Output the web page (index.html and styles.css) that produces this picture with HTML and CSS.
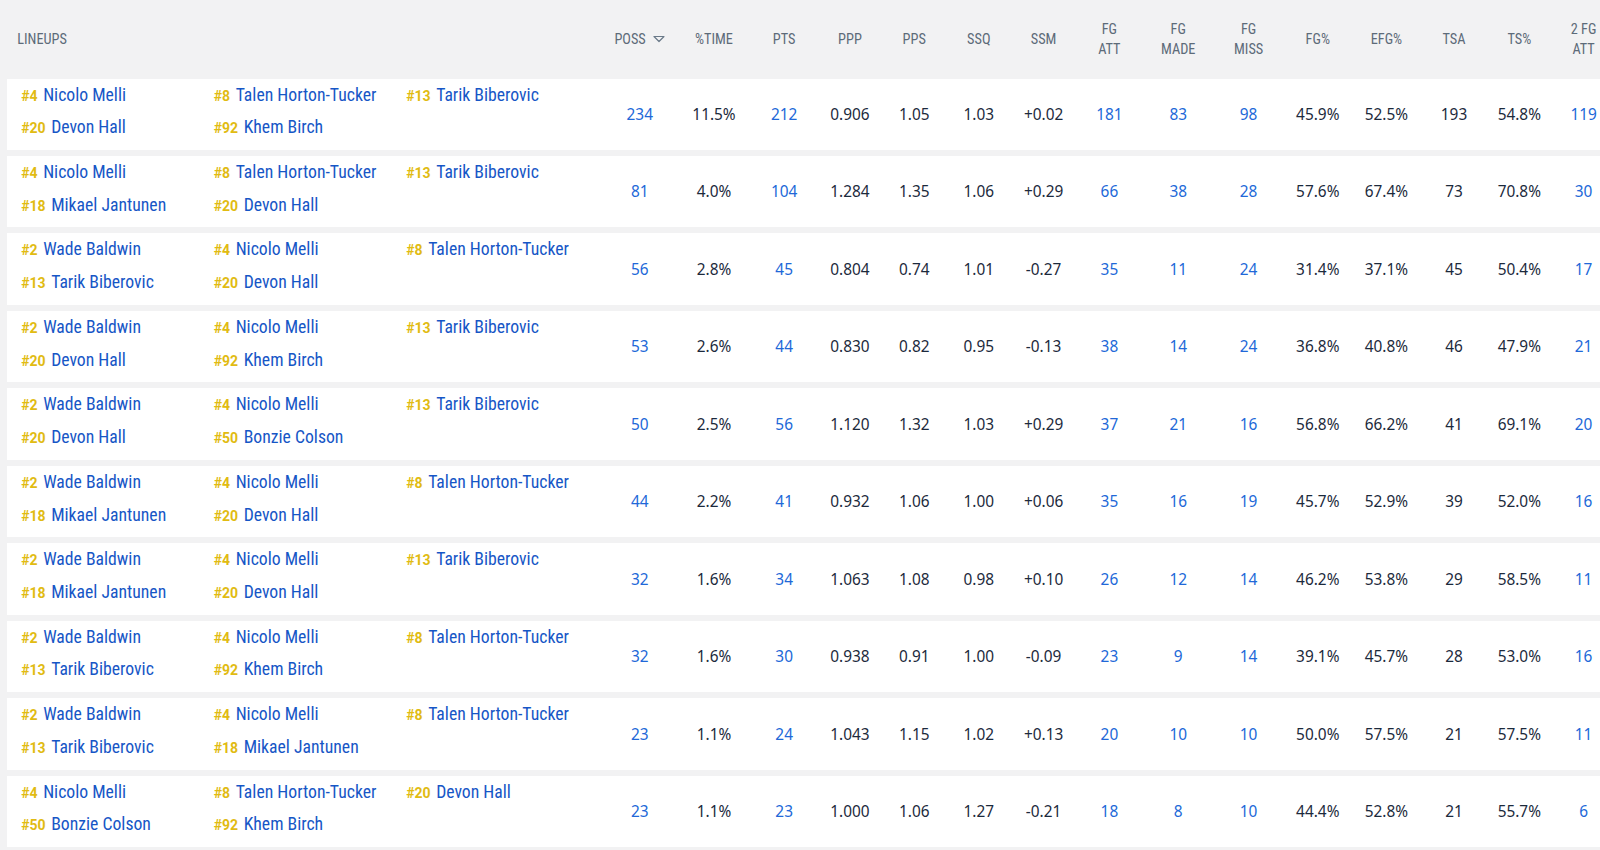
FILE: index.html
```html
<!DOCTYPE html>
<html lang="en">
<head>
<meta charset="utf-8">
<title>Lineups</title>
<link rel="stylesheet" href="styles.css">
</head>
<body>
<div class="table">
  <div class="head">
    <div class="h-lineup">LINEUPS</div>
    <div class="h">POSS <svg class="sort" width="12" height="8" viewBox="0 0 12 8"><path d="M1 1.5 L11 1.5 L6 6.5 Z" fill="none" stroke="#6b7a89" stroke-width="1.2" stroke-linejoin="round"/></svg></div>
    <div class="h">%TIME</div>
    <div class="h">PTS</div>
    <div class="h">PPP</div>
    <div class="h">PPS</div>
    <div class="h">SSQ</div>
    <div class="h">SSM</div>
    <div class="h">FG<br>ATT</div>
    <div class="h">FG<br>MADE</div>
    <div class="h">FG<br>MISS</div>
    <div class="h">FG%</div>
    <div class="h">EFG%</div>
    <div class="h">TSA</div>
    <div class="h">TS%</div>
    <div class="h">2 FG<br>ATT</div>
  </div>

  <div class="row">
    <div class="lineup">
      <span class="p"><b>#4</b>Nicolo Melli</span><span class="p"><b>#8</b>Talen Horton-Tucker</span><span class="p"><b>#13</b>Tarik Biberovic</span>
      <span class="p"><b>#20</b>Devon Hall</span><span class="p"><b>#92</b>Khem Birch</span>
    </div>
    <div class="n l">234</div><div class="n">11.5%</div><div class="n l">212</div><div class="n">0.906</div><div class="n">1.05</div><div class="n">1.03</div><div class="n">+0.02</div><div class="n l">181</div><div class="n l">83</div><div class="n l">98</div><div class="n">45.9%</div><div class="n">52.5%</div><div class="n">193</div><div class="n">54.8%</div><div class="n l">119</div><div class="n"></div>
  </div>

  <div class="row">
    <div class="lineup">
      <span class="p"><b>#4</b>Nicolo Melli</span><span class="p"><b>#8</b>Talen Horton-Tucker</span><span class="p"><b>#13</b>Tarik Biberovic</span>
      <span class="p"><b>#18</b>Mikael Jantunen</span><span class="p"><b>#20</b>Devon Hall</span>
    </div>
    <div class="n l">81</div><div class="n">4.0%</div><div class="n l">104</div><div class="n">1.284</div><div class="n">1.35</div><div class="n">1.06</div><div class="n">+0.29</div><div class="n l">66</div><div class="n l">38</div><div class="n l">28</div><div class="n">57.6%</div><div class="n">67.4%</div><div class="n">73</div><div class="n">70.8%</div><div class="n l">30</div><div class="n"></div>
  </div>

  <div class="row">
    <div class="lineup">
      <span class="p"><b>#2</b>Wade Baldwin</span><span class="p"><b>#4</b>Nicolo Melli</span><span class="p"><b>#8</b>Talen Horton-Tucker</span>
      <span class="p"><b>#13</b>Tarik Biberovic</span><span class="p"><b>#20</b>Devon Hall</span>
    </div>
    <div class="n l">56</div><div class="n">2.8%</div><div class="n l">45</div><div class="n">0.804</div><div class="n">0.74</div><div class="n">1.01</div><div class="n">-0.27</div><div class="n l">35</div><div class="n l">11</div><div class="n l">24</div><div class="n">31.4%</div><div class="n">37.1%</div><div class="n">45</div><div class="n">50.4%</div><div class="n l">17</div><div class="n"></div>
  </div>

  <div class="row">
    <div class="lineup">
      <span class="p"><b>#2</b>Wade Baldwin</span><span class="p"><b>#4</b>Nicolo Melli</span><span class="p"><b>#13</b>Tarik Biberovic</span>
      <span class="p"><b>#20</b>Devon Hall</span><span class="p"><b>#92</b>Khem Birch</span>
    </div>
    <div class="n l">53</div><div class="n">2.6%</div><div class="n l">44</div><div class="n">0.830</div><div class="n">0.82</div><div class="n">0.95</div><div class="n">-0.13</div><div class="n l">38</div><div class="n l">14</div><div class="n l">24</div><div class="n">36.8%</div><div class="n">40.8%</div><div class="n">46</div><div class="n">47.9%</div><div class="n l">21</div><div class="n"></div>
  </div>

  <div class="row">
    <div class="lineup">
      <span class="p"><b>#2</b>Wade Baldwin</span><span class="p"><b>#4</b>Nicolo Melli</span><span class="p"><b>#13</b>Tarik Biberovic</span>
      <span class="p"><b>#20</b>Devon Hall</span><span class="p"><b>#50</b>Bonzie Colson</span>
    </div>
    <div class="n l">50</div><div class="n">2.5%</div><div class="n l">56</div><div class="n">1.120</div><div class="n">1.32</div><div class="n">1.03</div><div class="n">+0.29</div><div class="n l">37</div><div class="n l">21</div><div class="n l">16</div><div class="n">56.8%</div><div class="n">66.2%</div><div class="n">41</div><div class="n">69.1%</div><div class="n l">20</div><div class="n"></div>
  </div>

  <div class="row">
    <div class="lineup">
      <span class="p"><b>#2</b>Wade Baldwin</span><span class="p"><b>#4</b>Nicolo Melli</span><span class="p"><b>#8</b>Talen Horton-Tucker</span>
      <span class="p"><b>#18</b>Mikael Jantunen</span><span class="p"><b>#20</b>Devon Hall</span>
    </div>
    <div class="n l">44</div><div class="n">2.2%</div><div class="n l">41</div><div class="n">0.932</div><div class="n">1.06</div><div class="n">1.00</div><div class="n">+0.06</div><div class="n l">35</div><div class="n l">16</div><div class="n l">19</div><div class="n">45.7%</div><div class="n">52.9%</div><div class="n">39</div><div class="n">52.0%</div><div class="n l">16</div><div class="n"></div>
  </div>

  <div class="row">
    <div class="lineup">
      <span class="p"><b>#2</b>Wade Baldwin</span><span class="p"><b>#4</b>Nicolo Melli</span><span class="p"><b>#13</b>Tarik Biberovic</span>
      <span class="p"><b>#18</b>Mikael Jantunen</span><span class="p"><b>#20</b>Devon Hall</span>
    </div>
    <div class="n l">32</div><div class="n">1.6%</div><div class="n l">34</div><div class="n">1.063</div><div class="n">1.08</div><div class="n">0.98</div><div class="n">+0.10</div><div class="n l">26</div><div class="n l">12</div><div class="n l">14</div><div class="n">46.2%</div><div class="n">53.8%</div><div class="n">29</div><div class="n">58.5%</div><div class="n l">11</div><div class="n"></div>
  </div>

  <div class="row">
    <div class="lineup">
      <span class="p"><b>#2</b>Wade Baldwin</span><span class="p"><b>#4</b>Nicolo Melli</span><span class="p"><b>#8</b>Talen Horton-Tucker</span>
      <span class="p"><b>#13</b>Tarik Biberovic</span><span class="p"><b>#92</b>Khem Birch</span>
    </div>
    <div class="n l">32</div><div class="n">1.6%</div><div class="n l">30</div><div class="n">0.938</div><div class="n">0.91</div><div class="n">1.00</div><div class="n">-0.09</div><div class="n l">23</div><div class="n l">9</div><div class="n l">14</div><div class="n">39.1%</div><div class="n">45.7%</div><div class="n">28</div><div class="n">53.0%</div><div class="n l">16</div><div class="n"></div>
  </div>

  <div class="row">
    <div class="lineup">
      <span class="p"><b>#2</b>Wade Baldwin</span><span class="p"><b>#4</b>Nicolo Melli</span><span class="p"><b>#8</b>Talen Horton-Tucker</span>
      <span class="p"><b>#13</b>Tarik Biberovic</span><span class="p"><b>#18</b>Mikael Jantunen</span>
    </div>
    <div class="n l">23</div><div class="n">1.1%</div><div class="n l">24</div><div class="n">1.043</div><div class="n">1.15</div><div class="n">1.02</div><div class="n">+0.13</div><div class="n l">20</div><div class="n l">10</div><div class="n l">10</div><div class="n">50.0%</div><div class="n">57.5%</div><div class="n">21</div><div class="n">57.5%</div><div class="n l">11</div><div class="n"></div>
  </div>

  <div class="row">
    <div class="lineup">
      <span class="p"><b>#4</b>Nicolo Melli</span><span class="p"><b>#8</b>Talen Horton-Tucker</span><span class="p"><b>#20</b>Devon Hall</span>
      <span class="p"><b>#50</b>Bonzie Colson</span><span class="p"><b>#92</b>Khem Birch</span>
    </div>
    <div class="n l">23</div><div class="n">1.1%</div><div class="n l">23</div><div class="n">1.000</div><div class="n">1.06</div><div class="n">1.27</div><div class="n">-0.21</div><div class="n l">18</div><div class="n l">8</div><div class="n l">10</div><div class="n">44.4%</div><div class="n">52.8%</div><div class="n">21</div><div class="n">55.7%</div><div class="n l">6</div><div class="n"></div>
  </div>
</div>
</body>
</html>
```

FILE: styles.css
```css
html, body {
  margin: 0;
  padding: 0;
}
body {
  background: #f2f2f3;
  overflow: hidden;
  width: 1600px;
  height: 850px;
}
.table {
  --cols: 595px 75.5px 73px 67.3px 64.3px 64.3px 64.8px 64.8px 66.8px 70.9px 69.9px 68.4px 68.9px 66.3px 64.3px 64.3px 60px;
  width: 1720px;
  padding-left: 7px;
}
.head {
  display: grid;
  grid-template-columns: var(--cols);
  height: 78.5px;
  align-items: center;
  font-family: "Roboto Condensed", "Liberation Sans Narrow", "DejaVu Sans Condensed", Roboto, sans-serif;
  font-size: 14.3px;
  line-height: 20.4px;
  color: #5d6b79;
}
.h-lineup {
  padding-left: 10.2px;
}
.h {
  text-align: center;
  white-space: nowrap;
}
.sort {
  margin-left: 4px;
  vertical-align: 1px;
}
.row {
  display: grid;
  grid-template-columns: var(--cols);
  height: 71.4px;
  margin-bottom: 6.1px;
  background: #ffffff;
  align-items: center;
}
.lineup {
  align-self: start;
  display: grid;
  grid-template-columns: 192.5px 192.5px 1fr;
  padding: 1px 0 0 14.3px;
  line-height: 31.6px;
  font-family: "Roboto Condensed", "Liberation Sans Narrow", "DejaVu Sans Condensed", Roboto, sans-serif;
  font-size: 17.7px;
  color: #1656c6;
  white-space: nowrap;
}
.p b {
  font-family: Roboto, "Noto Sans", sans-serif;
  font-size: 14px;
  font-weight: 700;
  color: #e1bb12;
  margin-right: 5.5px;
}
.n {
  text-align: center;
  font-family: "Noto Sans", "Open Sans", sans-serif;
  font-size: 15.4px;
  color: #1c2a3c;
}
.n.l {
  color: #2168d8;
}
```
